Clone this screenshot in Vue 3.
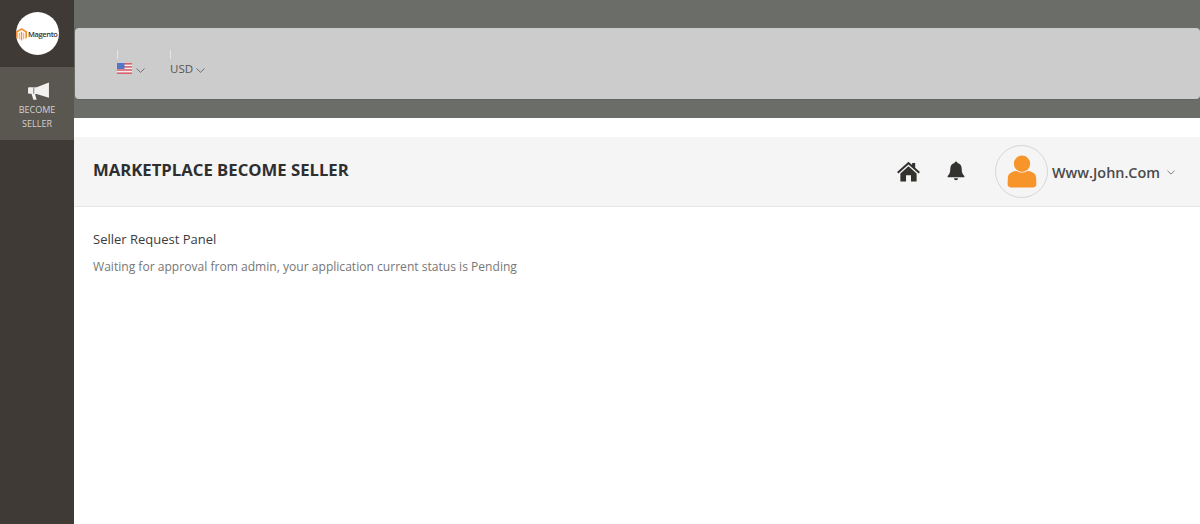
<script setup>
const title = 'MARKETPLACE BECOME SELLER'
</script>

<template>
  <div class="page">
    <aside class="side">
      <div class="logo-wrap">
        <div class="logo">
          <svg class="mark" viewBox="0 0 12 14" width="11" height="13">
            <path d="M6 0 L12 3.4 V10.6 L10.2 11.7 V4.5 L6 2.1 L1.8 4.5 V11.7 L0 10.6 V3.4 Z" fill="#f0923a"/>
            <path d="M5.2 4.2 L6 3.7 L6.8 4.2 V13 L6 13.6 L5.2 13 Z" fill="#f0923a"/>
            <path d="M3 5.4 L4.3 4.7 V12.4 L3 11.8 Z M7.7 4.7 L9 5.4 V11.8 L7.7 12.4 Z" fill="#f6b26b"/>
          </svg>
          <span class="logo-text">Magento</span>
        </div>
      </div>
      <div class="side-item">
        <svg class="horn" viewBox="0 0 24 20" width="23" height="19">
          <path d="M23 0.5 V16.5 L10 12.6 H8.4 L10 18.8 H6.6 L4.6 12.4 H2 A1 1 0 0 1 1 11.4 V6.6 A1 1 0 0 1 2 5.6 H10 Z" fill="#f2f1ef"/>
          <path d="M7 5.6 V12.4" stroke="#5a5650" stroke-width="0.8"/>
        </svg>
        <span>BECOME</span>
        <span>SELLER</span>
      </div>
    </aside>

    <div class="main">
      <div class="band">
        <div class="panel">
          <div class="switch flag-switch">
            <i class="tick"></i>
            <div class="switch-row">
              <svg class="flag" viewBox="0 0 15 11" width="15" height="11">
                <rect width="15" height="11" fill="#f3eeee"/>
                <rect y="0" width="15" height="1.6" fill="#d8616a"/>
                <rect y="3.1" width="15" height="1.6" fill="#d8616a"/>
                <rect y="6.2" width="15" height="1.6" fill="#d8616a"/>
                <rect y="9.4" width="15" height="1.6" fill="#d8616a"/>
                <rect width="7.5" height="6" fill="#5576c8"/>
              </svg>
              <svg class="chev" viewBox="0 0 9 5" width="9" height="5"><path d="M0.5 0.5 L4.5 4.3 L8.5 0.5" fill="none" stroke="#6f6f6f" stroke-width="1"/></svg>
            </div>
          </div>
          <div class="switch usd-switch">
            <i class="tick"></i>
            <div class="switch-row">
              <span class="usd">USD</span>
              <svg class="chev" viewBox="0 0 9 5" width="9" height="5"><path d="M0.5 0.5 L4.5 4.3 L8.5 0.5" fill="none" stroke="#6f6f6f" stroke-width="1"/></svg>
            </div>
          </div>
        </div>
      </div>

      <header class="head">
        <h1>{{ title }}</h1>
        <div class="tools">
          <svg class="home" viewBox="0 0 24 22" width="23" height="21">
            <path d="M12 0.8 L15.8 4.2 V2.2 H19 V7.1 L24 11.5 L22.6 13 L12 3.7 L1.4 13 L0 11.5 Z" fill="#33322f"/>
            <path d="M12 5.6 L20.5 13 V21.4 H14.6 V15 H9.4 V21.4 H3.5 V13 Z" fill="#33322f"/>
          </svg>
          <svg class="bell" viewBox="0 0 18 21" width="18" height="20">
            <path d="M9 0.5 A1.5 1.5 0 0 1 10.5 2.2 C13.5 2.9 15 5.3 15 8.4 C15 12.4 16 14 17.8 15.8 V17 H0.2 V15.8 C2 14 3 12.4 3 8.4 C3 5.3 4.5 2.9 7.5 2.2 A1.5 1.5 0 0 1 9 0.5 Z" fill="#33322f"/>
            <path d="M6.8 18 H11.2 A2.2 2.2 0 0 1 6.8 18 Z" fill="#33322f"/>
          </svg>
          <div class="avatar">
            <svg viewBox="0 0 30 34" width="30" height="33">
              <circle cx="15" cy="9" r="8.4" fill="#f7942a"/>
              <path d="M5 17.6 C7 16.6 9 16.4 10 16.8 C12.6 18.8 17.4 18.8 20 16.8 C21 16.4 23 16.6 25 17.6 C28 18.8 29.4 20.6 29.6 23.6 L29.8 30 C29.8 32.4 28.6 33.4 26.6 33.4 H3.4 C1.4 33.4 0.2 32.4 0.2 30 L0.4 23.6 C0.6 20.6 2 18.8 5 17.6 Z" fill="#f7942a"/>
            </svg>
          </div>
          <span class="name">Www.John.Com</span>
          <svg class="name-chev" viewBox="0 0 9 5" width="8" height="5"><path d="M0.5 0.5 L4.5 4.3 L8.5 0.5" fill="none" stroke="#6f6f6f" stroke-width="1"/></svg>
        </div>
      </header>

      <section class="body">
        <h2>Seller Request Panel</h2>
        <p>Waiting for approval from admin, your application current status is Pending</p>
      </section>
    </div>
  </div>
</template>

<style>
html, body { margin: 0; background: #fff; }
</style>

<style scoped>
.page {
  display: flex;
  height: 524px;
  width: 1200px;
  overflow: hidden;
  font-family: "Open Sans", "Noto Sans", sans-serif;
  background: #fff;
}
.side {
  width: 74px;
  flex: none;
  background: #3f3a35;
  display: flex;
  flex-direction: column;
}
.logo-wrap {
  height: 67px;
  display: flex;
  align-items: flex-start;
  justify-content: center;
  padding-top: 12px;
  box-sizing: border-box;
}
.logo {
  width: 43px;
  height: 43px;
  border-radius: 50%;
  background: #fff;
  display: flex;
  align-items: center;
  justify-content: flex-start;
  box-sizing: border-box;
  gap: 1.5px;
}
.mark { flex: none; margin-top: 1px; }
.logo-text {
  font-size: 7.5px;
  font-weight: 600;
  color: #333;
  letter-spacing: -0.35px;
  white-space: nowrap;
}
.side-item {
  height: 73px;
  background: #5a5650;
  display: flex;
  flex-direction: column;
  align-items: center;
  color: #d3d1ce;
  font-size: 9px;
  line-height: 14px;
  padding-top: 15px;
  box-sizing: border-box;
}
.horn { margin-bottom: 2px; margin-left: 2px; }
.main {
  flex: 1;
  min-width: 0;
  display: flex;
  flex-direction: column;
}
.band {
  height: 118px;
  background: #6b6d69;
  padding-top: 28px;
  box-sizing: border-box;
}
.panel {
  margin-left: 1px;
  height: 71px;
  background: #cccccc;
  border-radius: 4px;
  display: flex;
  padding-left: 42px;
  box-sizing: border-box;
  box-shadow: 0 1px 1px rgba(0, 0, 0, 0.08);
}
.switch {
  position: relative;
  padding-top: 34px;
}
.tick {
  position: absolute;
  left: 0;
  top: 22px;
  width: 1px;
  height: 9px;
  background: #e4e4e4;
}
.flag-switch { width: 53px; }
.switch-row {
  display: flex;
  align-items: center;
  height: 13px;
}
.flag { flex: none; }
.flag-switch .chev { margin-left: 4px; margin-top: 3px; }
.usd {
  font-size: 11.5px;
  line-height: 13px;
  color: #555;
}
.usd-switch .chev { margin-left: 3px; margin-top: 3px; }
.head {
  margin-top: 19px;
  height: 70px;
  background: #f5f5f5;
  border-bottom: 1px solid #e6e6e6;
  display: flex;
  align-items: center;
  justify-content: space-between;
  padding: 0 25px 0 19px;
  box-sizing: border-box;
}
.head h1 {
  margin: 0 0 5px;
  font-size: 16.7px;
  font-weight: 700;
  color: #2f2f2f;
}
.tools {
  display: flex;
  align-items: center;
}
.home { margin-top: 0; }
.bell { margin-left: 27px; margin-top: -1px; }
.avatar {
  width: 53px;
  height: 53px;
  margin-left: 30px;
  border-radius: 50%;
  border: 1px solid #d6d6d6;
  background: #f5f5f5;
  display: flex;
  align-items: center;
  justify-content: center;
  box-sizing: border-box;
  flex: none;
}
.name {
  margin-left: 4px;
  font-size: 14.4px;
  font-weight: 600;
  color: #4a4a4a;
  margin-top: 1px;
}
.name-chev { margin-left: 7px; margin-top: 1px; }
.body {
  padding: 24px 19px;
}
.body h2 {
  margin: 0;
  font-size: 13px;
  line-height: 17px;
  font-weight: 400;
  color: #3b3b3b;
}
.body p {
  margin: 11px 0 0;
  font-size: 12.08px;
  line-height: 16px;
  color: #777;
}
</style>
